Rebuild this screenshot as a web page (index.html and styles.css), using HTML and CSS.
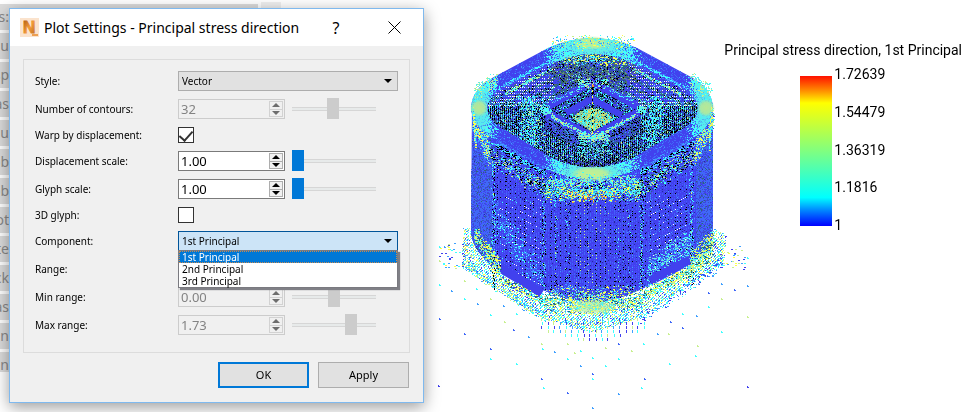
FILE: index.html
```html
<!DOCTYPE html>
<html lang="en">
<head>
<meta charset="utf-8">
<title>Plot Settings</title>
<link rel="stylesheet" href="styles.css">
</head>
<body>
<main class="workspace">
  <ul class="backlist">
    <li><span>ts:</span></li><li><span>au</span></li><li><span>sp</span></li><li><span>as</span></li><li><span>qu</span></li><li><span>ob</span></li><li><span>ob</span></li><li><span>ot</span></li><li><span>te</span></li><li><span>ck</span></li><li><span>as</span></li><li><span>in</span></li><li><span>in</span></li>
  </ul>
  <div class="backlist-edge"></div>
  <section class="view">
    <canvas id="model" width="320" height="382"></canvas>
    <div class="legend">
      <h2>Principal stress direction, 1st Principal</h2>
      <div class="scale">
        <div class="ramp"></div>
        <ol class="ticks"><li>1.72639</li><li>1.54479</li><li>1.36319</li><li>1.1816</li><li>1</li></ol>
      </div>
    </div>
  </section>
</main>

<form class="dialog">
  <header class="titlebar">
    <svg class="logo" width="20" height="20" viewBox="0 0 20 20" aria-hidden="true">
      <defs><linearGradient id="amber" x1="0" y1="0" x2="1" y2="1"><stop offset="0" stop-color="#a8530c"/><stop offset=".5" stop-color="#f29a38"/><stop offset="1" stop-color="#b96818"/></linearGradient></defs>
      <rect width="19" height="19" fill="#fbe3cd"/>
      <text x="3" y="15" class="logo-letter" fill="url(#amber)" stroke="url(#amber)">N</text>
      <rect x="12" y="16" width="6" height="2" fill="#eda052"/>
    </svg>
    <h1>Plot Settings - Principal stress direction</h1>
    <button type="button" class="tool help" aria-label="Help">?</button>
    <button type="button" class="tool" aria-label="Close"><svg width="13" height="13" viewBox="0 0 13 13"><path d="M.5.5l12 12M12.5.5l-12 12" stroke="#000" fill="none"/></svg></button>
  </header>

  <div class="group">
    <label for="style">Style:</label>
    <div class="combo"><select id="style"><option>Vector</option></select></div>

    <label for="contours">Number of contours:</label>
    <div class="pair"><div class="spin off"><input id="contours" type="text" value="32" disabled><span class="steps"><button type="button" disabled aria-label="Up"></button><button type="button" disabled aria-label="Down"></button></span></div><input type="range" value="49" disabled aria-label="Number of contours"></div>

    <label for="warp">Warp by displacement:</label>
    <input id="warp" type="checkbox" checked>

    <label for="disp">Displacement scale:</label>
    <div class="pair"><div class="spin"><input id="disp" type="text" value="1.00"><span class="steps"><button type="button" aria-label="Up"></button><button type="button" aria-label="Down"></button></span></div><input type="range" value="0" aria-label="Displacement scale"></div>

    <label for="glyph">Glyph scale:</label>
    <div class="pair"><div class="spin"><input id="glyph" type="text" value="1.00"><span class="steps"><button type="button" aria-label="Up"></button><button type="button" aria-label="Down"></button></span></div><input type="range" value="0" aria-label="Glyph scale"></div>

    <label for="solid">3D glyph:</label>
    <input id="solid" type="checkbox">

    <label for="component">Component:</label>
    <div class="combo open">
      <select id="component"><option>1st Principal</option><option>2nd Principal</option><option>3rd Principal</option></select>
      <ul class="menu" role="listbox" aria-label="Component">
        <li role="option" aria-selected="true">1st Principal</li>
        <li role="option">2nd Principal</li>
        <li role="option">3rd Principal</li>
      </ul>
    </div>

    <span class="name">Range:</span>
    <div class="pair"></div>

    <label for="min">Min range:</label>
    <div class="pair"><div class="spin off"><input id="min" type="text" value="0.00" disabled><span class="steps"><button type="button" disabled aria-label="Up"></button><button type="button" disabled aria-label="Down"></button></span></div><input type="range" value="50" disabled aria-label="Min range"></div>

    <label for="max">Max range:</label>
    <div class="pair"><div class="spin off"><input id="max" type="text" value="1.73" disabled><span class="steps"><button type="button" disabled aria-label="Up"></button><button type="button" disabled aria-label="Down"></button></span></div><input type="range" value="74" disabled aria-label="Max range"></div>
  </div>

  <footer class="actions">
    <button type="button" class="primary">OK</button>
    <button type="button">Apply</button>
  </footer>
</form>
<script src="model.js"></script>
</body>
</html>
```
FILE: styles.css
```css
* { box-sizing: border-box; }
body {
  margin: 0;
  background: #fff;
  color: #000;
  font: 11px/20px "Noto Sans", "Open Sans", sans-serif;
  overflow: hidden;
}
ul, ol, h1, h2 { margin: 0; padding: 0; list-style: none; font-weight: 400; }
button, input, select { font: inherit; color: inherit; margin: 0; padding: 0; border-radius: 0; }

.workspace { display: flex; min-height: 100vh; gap: 3px; align-items: flex-start; }
.backlist { width: 258px; padding-top: 4px; display: grid; gap: 3px; }
.backlist li { height: 26px; background: #dcdcdc; color: #8a8a8a; font-size: 14px; line-height: 26px; }
.backlist li:last-child { height: 20px; }
.backlist span { display: flex; justify-content: flex-end; width: 9px; }
.backlist-edge { width: 20px; height: 370px; margin-top: 2px; background: #f0f0f0; }
.view { position: relative; flex: 1; padding: 30px 0 0 149px; }
.view canvas { display: block; }

.legend { position: absolute; top: 40px; right: 15px; font: 14px/20px Roboto, "Noto Sans", sans-serif; }
.legend h2 { font-size: 14px; white-space: nowrap; }
.scale { display: flex; gap: 2px; padding: 6px 0 0 76px; }
.ramp {
  width: 32px;
  height: 150px;
  margin-top: 10px;
  background: linear-gradient(#ff1000, #ff9000 10%, #ffff00 18%, #80ff80 50%, #00ffff 81%, #0080ff 90%, #0000ff);
}
.ticks { line-height: 16px; height: 167px; display: flex; flex-direction: column; justify-content: space-between; }

.dialog {
  position: absolute;
  left: 9px;
  top: 8px;
  width: 415px;
  background: #f0f0f0;
  border: 1px solid #7fb9ee;
  box-shadow: 0 4px 15px rgba(0, 0, 0, .4);
}
.titlebar { display: flex; align-items: center; height: 37px; background: #fff; padding-left: 10px; }
.logo-letter { font: 700 17px "Liberation Sans", sans-serif; stroke-width: 1; }
h1 { flex: 1; margin-left: 4px; font-size: 14px; line-height: 20px; white-space: nowrap; }
.tool { width: 58px; height: 36px; border: 0; background: none; display: grid; place-items: center; }
.tool.help { font-size: 16px; }

.group {
  margin: 13px 13px 9px;
  padding: 11px 11px 17px;
  border: 1px solid #dcdcdc;
  display: grid;
  grid-template-columns: 143px 220px;
  row-gap: 8px;
}
.group label, .group .name { font-size: 10px; align-self: center; height: 20px; margin-block: -2px; }

.combo { position: relative; height: 20px; font-size: 10px; }
.combo select {
  display: block; width: 100%; height: 20px; padding: 0 3px; line-height: 18px;
  appearance: none; border: 1px solid #adadad; background: #e1e1e1; outline: 0;
}
.combo.open select { border-color: #005499; background: #cce4f7; }
.combo::after {
  content: ""; position: absolute; right: 6px; top: 8px;
  border: 4px solid transparent; border-top-color: #000; border-bottom: 0;
}
.menu {
  position: absolute; z-index: 1; top: 19px; left: 0; right: 0;
  background: #fff; border: 1px solid #7a7a80; box-shadow: 2px 2px 1px #808086;
}
.menu li { height: 12px; line-height: 12px; padding-left: 3px; }
.menu li[aria-selected] { line-height: 10px; padding-left: 2px; border: 1px dotted #c88a50; background: #0078d7; color: #fff; }

.pair { display: flex; gap: 7px; height: 20px; align-items: center; }
.spin { display: flex; width: 107px; height: 20px; border: 1px solid #7a7a7a; background: #fff; padding-right: 1px; }
.spin input { flex: 1; min-width: 0; border: 0; background: none; padding-left: 2px; font-size: 13px; line-height: 18px; outline: 0; }
.steps { display: grid; width: 14px; height: 16px; margin-top: 1px; }
.steps button { border: 1px solid #adadad; background: #f0f0f0; display: grid; place-items: center; min-height: 0; }
.steps button + button { border-top: 0; }
.steps button::before { content: ""; border: 4px solid transparent; border-top: 0; border-bottom-color: #000; }
.steps button + button::before { border: 4px solid transparent; border-bottom: 0; border-top-color: #000; }
.spin.off { border-color: #ccc; background: #f0f0f0; color: #838383; }
.off .steps button { border-color: #d2d2d2; }
.off .steps button::before { border-bottom-color: #6d6d6d; }
.off .steps button + button::before { border-top-color: #6d6d6d; }

input[type="range"] { appearance: none; width: 84px; height: 21px; background: none; outline: 0; }
input[type="range"]::-webkit-slider-runnable-track { height: 4px; border: solid #d6d6d6; border-width: 1px 0; background: #e7eaea; }
input[type="range"]::-webkit-slider-thumb { appearance: none; width: 12px; height: 21px; margin-top: -10px; background: #0078d7; border: 0; border-radius: 0; }
input[type="range"]:disabled::-webkit-slider-thumb { background: #ccc; }

input[type="checkbox"] { appearance: none; width: 16px; height: 16px; border: 1px solid #333; background: #fff; display: grid; place-items: center; }
input[type="checkbox"]:checked::before { content: ""; width: 6px; height: 11px; border: solid #333; border-width: 0 2px 2px 0; transform: rotate(42deg); margin-bottom: 3px; }

.actions { display: flex; justify-content: flex-end; gap: 9px; padding: 0 14px 14px; }
.actions button { width: 91px; height: 26px; border: 1px solid #adadad; background: #e1e1e1; }
.actions .primary { border: 2px solid #0078d7; }
```
FILE: model.js
```js
const canvas = document.getElementById('model');
const ctx = canvas.getContext('2d');
const OX = 433, OY = 30;

// Small seeded generator so the glyph cloud is the same on every load.
let seed = 20177;
function rnd() {
  seed = (seed + 0x6d2b79f5) | 0;
  let t = Math.imul(seed ^ (seed >>> 15), 1 | seed);
  t = (t + Math.imul(t ^ (t >>> 7), 61 | t)) ^ t;
  return ((t ^ (t >>> 14)) >>> 0) / 4294967296;
}

const BLUE = '#4141ee', SKY = '#40a0ff', MID = '#4068f8', CYAN = '#40ffff', AQUA = '#70e8d8';
const LIME = '#c8f090', YEL = '#ffff48', BLK = '#000', TEAL = '#2a6878', WHITE = '#fff', NAVY = '#2428a0', ORG = '#f09030';

function dot(x, y, color, w = 1, h = 1) {
  ctx.fillStyle = color;
  ctx.fillRect(Math.round(x) - OX, Math.round(y) - OY, w, h);
}
function shape(d) {
  const p = new Path2D();
  p.addPath(new Path2D(d), new DOMMatrix([1, 0, 0, 1, -OX, -OY]));
  return p;
}
// Scatter single pixels inside a shape; mix is a list of [color, probability].
// weight(x, y) returns a factor (or boolean) applied to every probability.
function speckle(p, mix, weight, rule = 'nonzero') {
  for (let y = 0; y < 382; y++) for (let x = 0; x < 320; x++) {
    const w = weight ? Number(weight(x + OX, y + OY)) : 1;
    if (w <= 0 || !ctx.isPointInPath(p, x + .5, y + .5, rule)) continue;
    let r = rnd() / w;
    for (const [c, k] of mix) {
      if (r < k) { ctx.fillStyle = c; ctx.fillRect(x, y, 1, 1); break; }
      r -= k;
    }
  }
}
// Fuzzy line of glyphs from a to b.
function fuzz(x1, y1, x2, y2, width, count, colors) {
  for (let i = 0; i < count; i++) {
    const t = rnd(), o = (rnd() + rnd() - 1) * width;
    dot(x1 + (x2 - x1) * t, y1 + (y2 - y1) * t + o, colors[Math.floor(rnd() * colors.length)], rnd() < .25 ? 2 : 1);
  }
}
function line(d, color, width) {
  ctx.strokeStyle = color;
  ctx.lineWidth = width;
  ctx.stroke(shape(d));
}
// Soft elliptical patch of colour.
function glow(x, y, rx, ry, rgb, alpha = 1) {
  ctx.save();
  ctx.translate(x - OX, y - OY);
  ctx.scale(rx, ry);
  const g = ctx.createRadialGradient(0, 0, 0, 0, 0, 1);
  g.addColorStop(0, `rgba(${rgb},${alpha})`);
  g.addColorStop(.6, `rgba(${rgb},${alpha * .85})`);
  g.addColorStop(1, `rgba(${rgb},0)`);
  ctx.fillStyle = g;
  ctx.fillRect(-1, -1, 2, 2);
  ctx.restore();
}

// Ground glyphs
const skirt = shape('M463 228 L470 228 L480 250 L545 298 L640 298 L705 250 L715 228 L727 235 L724 262 L640 318 L592 333 L540 318 L462 268 Z');
speckle(skirt, [[CYAN, .23], [YEL, .1], [SKY, .15], [LIME, .13], [BLUE, .09]], (x, y) => (x + y) % 3 !== 0);
fuzz(462, 262, 545, 318, 7, 260, [CYAN, SKY, LIME]);
fuzz(724, 262, 640, 318, 7, 220, [CYAN, SKY, BLUE]);
for (let x = 541; x < 645; x += 6) for (let y = 318; y < 342 - Math.abs(592 - x) / 4; y += 4)
  dot(x + (rnd() * 2 | 0), y, [SKY, BLUE, CYAN, LIME][rnd() * 4 | 0], 1, 3);
for (let i = 0; i < 85; i++) {
  const side = rnd() < .5 ? -1 : 1, d = 120 + rnd() * 34;
  dot(592 + side * d, 240 + rnd() * 26 + (d - 120) / 6, [CYAN, SKY, YEL, BLUE, LIME][rnd() * 5 | 0], 2);
}
[[26,108],[43,108],[28,150],[26,222],[26,325],[24,525],[62,240],[101,210],[102,265],[103,370],[139,235],[141,280],[181,265],[181,312],[180,415],[180,445],[220,285],[223,333],[258,308],[250,358],[257,460],[295,378],[333,400],[335,415],[333,505],[338,530],[371,422],[410,400],[410,445],[410,547],[449,420],[449,465],[433,425],[487,440],[487,488],[487,505],[487,590],[526,410],[526,465],[564,398],[564,445],[564,548],[602,420],[640,400],[641,505],[634,532],[680,368],[713,370],[716,460],[721,333],[757,310],[797,315],[800,405],[795,435],[835,245],[835,288],[873,220],[873,265],[873,362],[912,238],[952,140],[950,225],[950,318],[950,527],[757,350]]
  .forEach(([x, y], i) => {
    const c = y > 520 && (x < 30 || x > 940) ? BLUE : [CYAN, SKY, LIME, CYAN, MID][i % 5];
    dot(430 + x / 3, 210 + y / 3, c, 1, 2);
    dot(431 + x / 3, 211 + y / 3, c);
  });

// Outer wall
const body = shape('M472 105 L713 105 L713 235 Q712 247 690 264 L640 290 Q592 314 543 290 L490 264 Q471 248 471 230 Z');
ctx.fillStyle = BLUE;
ctx.fill(body);
speckle(body, [[MID, .3], [NAVY, .05], ['#4c50ff', .2]], x => x % 2 === 0);
speckle(body, [[MID, .5], ['#3a50c8', .2], [TEAL, .05]], x => x < 492 || x > 695);
speckle(body, [[BLK, .5]], (x, y) => x % 5 === 0 && y % 4 === 1 && x > 495 && x < 690);
speckle(body, [[BLK, .3], [SKY, .2]], (x, y) => x % 9 === 2 && y % 2 === 1 && x > 495 && x < 690);
speckle(body, [[WHITE, .35], [CYAN, .12]], (x, y) => x > 497 && x < 542 && (y - (x >> 1)) % 7 === 0 && x % 2 === 0 && y > 195);
speckle(body, [[WHITE, .28], [SKY, .3]], (x, y) => x > 645 && x < 688 && (y + (x >> 1)) % 7 === 0 && x % 2 === 1 && y > 195);
speckle(body, [[LIME, .3], [SKY, .15]], (x, y) => x > 572 && x < 612 && x % 4 === 0 && y % 3 === 0);
for (const [x, k] of [[493, 1], [543, .8], [555, .45], [566, .3], [618, .3], [628, .35], [641, .9], [691, 1]])
  for (let y = 160; y < 290; y++) {
    if (rnd() < .65 * k) dot(x + (rnd() * 4 - 2), y, [CYAN, SKY, AQUA, CYAN][rnd() * 4 | 0]);
    if (rnd() < .4 * k) dot(x + (rnd() * 5 - 2), y, [CYAN, SKY][rnd() * 2 | 0]);
    if (rnd() < .4 * k) dot(x + (rnd() * 3 - 1), y, BLK);
    if (rnd() < .06 * k) dot(x, y, LIME);
  }
fuzz(494, 215, 543, 285, 22, 380, [SKY, CYAN, MID]);
fuzz(647, 272, 692, 240, 16, 460, [CYAN, SKY, AQUA]);

// Lower rim
line('M500 268 L542 293', BLUE, 9);
line('M650 281 L690 260', BLUE, 9);
fuzz(474, 235, 500, 270, 13, 450, [CYAN, LIME, AQUA, TEAL, YEL]);
fuzz(500, 278, 545, 302, 5, 240, [YEL, CYAN, LIME, BLUE, TEAL]);
fuzz(642, 294, 690, 270, 7, 400, [YEL, CYAN, LIME, AQUA, TEAL]);
fuzz(690, 265, 713, 242, 17, 500, [CYAN, LIME, AQUA, YEL, TEAL]);
fuzz(544, 299, 642, 299, 15, 1300, [CYAN, AQUA, LIME, SKY, YEL, TEAL]);
glow(593, 307, 24, 8, '184,238,160', .85);
fuzz(570, 307, 615, 307, 9, 150, [LIME, AQUA, YEL, CYAN]);

// Glyphs hanging below the top ring
fuzz(472, 115, 489, 155, 16, 560, [CYAN, AQUA, LIME, SKY, BLUE, YEL]);
fuzz(713, 115, 694, 155, 16, 560, [CYAN, AQUA, LIME, SKY, BLUE, YEL]);
fuzz(489, 152, 550, 192, 13, 850, [CYAN, SKY, BLUE, TEAL, LIME, BLK]);
fuzz(694, 152, 634, 192, 13, 850, [CYAN, SKY, BLUE, TEAL, LIME, BLK]);
fuzz(545, 190, 640, 190, 12, 1500, [CYAN, AQUA, YEL, SKY, TEAL, CYAN]);
fuzz(570, 196, 615, 196, 7, 130, [YEL, ORG, LIME]);
fuzz(578, 186, 608, 186, 4, 70, [NAVY, BLUE, BLK]);

// Cup interior
const outer = 'M471 108 Q472 88 494 77 L548 48 Q592 28 637 48 L691 77 Q712 88 713 108 Q712 126 692 139 L640 168 Q592 190 545 168 L493 139 Q472 126 471 108 Z';
const inner = 'M487 108 Q487 97 506 87 L556 62 Q592 46 630 62 L680 87 Q698 97 698 108 Q698 119 684 128 L633 158 Q592 177 552 158 L501 128 Q487 119 487 108 Z';
const cup = shape(inner);
ctx.fillStyle = '#2e50b8';
ctx.fill(cup);
speckle(cup, [[BLK, .12], [TEAL, .24], [BLUE, .26], [AQUA, .08], ['#507860', .07]]);
speckle(cup, [[BLK, .4], [NAVY, .2]], (x, y) => y > 105 && x % 2 === 0);
speckle(cup, [[CYAN, .2], [SKY, .15], [LIME, .06]], (x, y) => y > 95 && y < 160 && x % 2 === 1);
speckle(cup, [[BLUE, .7]], (x, y) => y < 102 && Math.abs(x - 592) > 32 && (y - (Math.abs(x - 592) >> 1) + 200) % 9 < 5);
speckle(cup, [[WHITE, .6], [SKY, .25]], (x, y) => y < 106 && Math.abs(x - 592) > 36 && y % 3 === 0 && x % 2 === 0);
speckle(cup, [[CYAN, .55], [LIME, .1]], (x, y) => x % 2 === 0 && y > 95 && y < 150 ? Math.max(0, 1 - Math.min(Math.abs(x - 530), Math.abs(x - 655)) / 16) : 0);
fuzz(550, 57, 635, 57, 9, 800, [CYAN, LIME, TEAL, SKY, YEL]);
fuzz(548, 73, 636, 73, 13, 550, ['#6f8c80', '#507060', NAVY, TEAL]);

// Top ring
const ring = shape(outer + inner);
ctx.fillStyle = BLUE;
ctx.fill(ring, 'evenodd');
speckle(ring, [[MID, .2], [SKY, .03]], null, 'evenodd');
const corner = (x) => {
  const d = Math.abs(x - 592);
  return Math.max(0, Math.min(1, (50 - d) / 14), Math.min(1, (d - 93) / 12));
};
speckle(ring, [[CYAN, .5], [AQUA, .2], [SKY, .2]], corner, 'evenodd');
ctx.save();
ctx.clip(ring, 'evenodd');
glow(592, 45, 34, 12, '100,236,228', .9);
glow(592, 173, 38, 13, '100,236,228', .9);
glow(479, 108, 14, 28, '90,228,236', .8);
glow(706, 108, 14, 28, '90,228,236', .8);
ctx.restore();
glow(592, 43, 20, 7, '190,240,150');
glow(592, 174, 22, 8, '196,240,144');
glow(479, 108, 9, 9, '184,232,150');
glow(706, 108, 9, 9, '184,232,150');
fuzz(552, 42, 633, 42, 8, 260, [CYAN, LIME, SKY, CYAN, YEL]);
fuzz(474, 92, 496, 80, 11, 180, [CYAN, AQUA, LIME]);
fuzz(711, 92, 690, 80, 11, 180, [CYAN, AQUA, LIME]);
for (const s of [-1, 1]) {
  const e = d => 592 + s * d;
  fuzz(e(94), 88, e(40), 59, 2, 170, [CYAN, SKY]);
  fuzz(e(88), 94, e(42), 69, 2, 130, [AQUA, LIME, CYAN]);
  fuzz(e(100), 143, e(48), 173, 3, 260, [CYAN, SKY, BLK]);
  fuzz(e(96), 141, e(46), 169, 2, 110, [MID, SKY]);
  fuzz(e(119), 112, e(117), 142, 10, 200, [YEL, CYAN, LIME, SKY]);
}
fuzz(547, 180, 638, 180, 8, 500, [CYAN, AQUA, SKY, CYAN, LIME]);

// Centre bosses
ctx.fillStyle = '#3450c0';
const boss = shape('M545 111 L592 138 L641 111 L641 129 L592 158 L545 129 Z');
ctx.fill(boss);
speckle(boss, [[BLK, .18], [TEAL, .2], [BLUE, .3], [SKY, .08]]);
fuzz(577, 148, 610, 148, 12, 300, [CYAN, AQUA, TEAL, BLK]);
const floor = shape('M549 110 L592 85 L638 110 L592 134 Z');
ctx.fillStyle = '#2c48b0';
ctx.fill(floor);
speckle(floor, [[BLK, .2], [TEAL, .2], [BLUE, .3], [CYAN, .18]]);
line('M548 107 L592 82 L638 107', BLUE, 7);
line('M547 113 L592 137 L639 112', BLUE, 8);
line('M566 113 L592 99 L622 115', BLUE, 6);
fuzz(552, 101, 588, 83, 3, 60, [CYAN, SKY, AQUA]);
fuzz(634, 101, 596, 83, 3, 60, [CYAN, SKY, AQUA]);
fuzz(550, 115, 592, 139, 3, 170, [AQUA, CYAN, LIME]);
fuzz(634, 115, 592, 139, 3, 170, [AQUA, CYAN, LIME]);
ctx.fillStyle = '#78c8a8';
const dome = shape('M572 118 Q592 98 614 119 L592 132 Z');
ctx.fill(dome);
speckle(dome, [['#d8e068', .3], [TEAL, .08], [BLK, .04], [CYAN, .26]]);
fuzz(577, 82, 607, 82, 7, 170, [CYAN, AQUA, LIME, BLK]);
fuzz(578, 136, 608, 136, 6, 240, [CYAN, LIME, AQUA]);
fuzz(541, 110, 550, 110, 6, 70, [CYAN, AQUA]);
fuzz(636, 110, 645, 110, 6, 70, [CYAN, AQUA]);
for (let y = 84; y < 134; y += 3) dot(592, y, y % 2 ? BLK : YEL, 1, 2);
dot(592, 85, ORG, 2, 2);
```
